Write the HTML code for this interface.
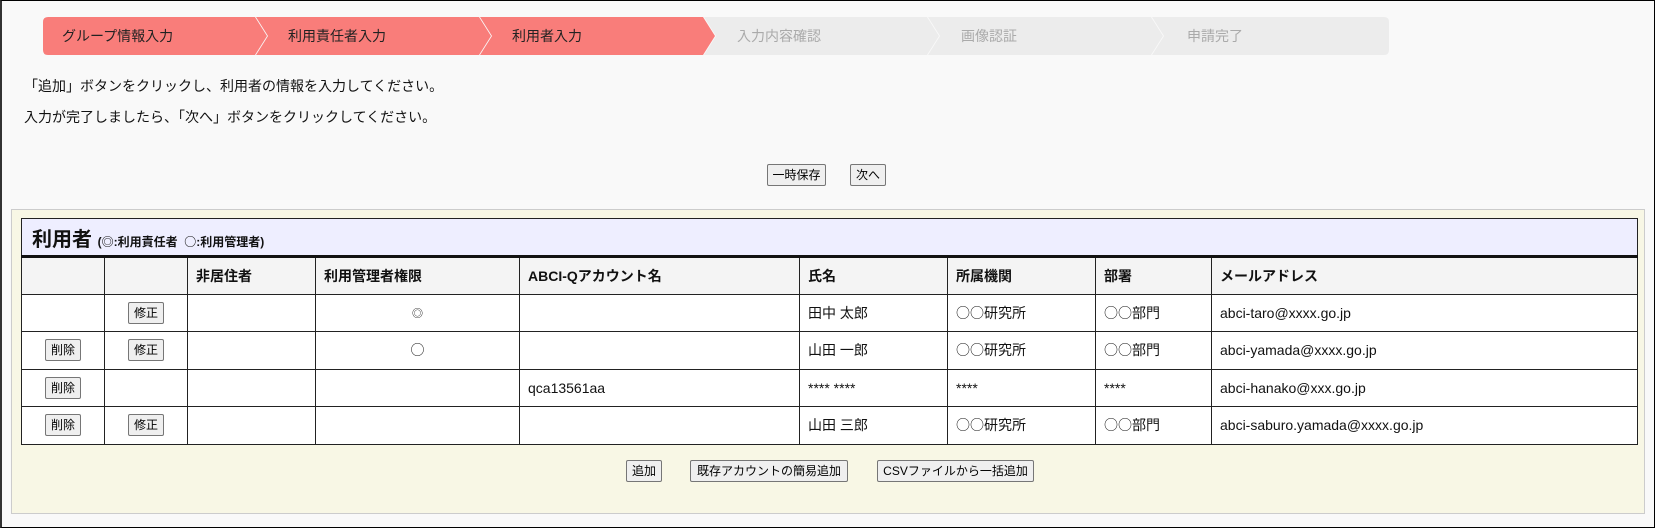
<!DOCTYPE html>
<html><head><meta charset="utf-8"><style>
*{box-sizing:border-box;margin:0;padding:0}
html,body{width:1655px;height:528px;overflow:hidden}
body{background:#f9f9f9;font-family:"Liberation Sans","Noto Sans CJK JP",sans-serif;font-size:14px;color:#111;position:relative;border:1px solid #000;border-left:2px solid #333}
.steps{position:absolute;left:41px;top:16px;height:38px;width:1346px}
.st{position:absolute;top:0;height:38px;line-height:38px;font-size:14px;padding-left:19px}
.btn{position:absolute;background:#efefef;border:1px solid #767676;border-radius:2px;font-size:12px;height:22px;line-height:20px;text-align:center;color:#000}
.msg{position:absolute;left:22px;font-size:14px}
.panel{position:absolute;left:9px;top:208px;width:1634px;height:305px;background:#f8f7e5;border:1px solid #ccc}
table{position:absolute;left:9px;top:8px;border-collapse:collapse;width:1617px;background:#fff}
td,th{border:1px solid #222;font-size:14px;height:37.5px;padding:0 8px;text-align:left}
th{background:#f4f4f4;font-weight:bold}
.ttl{background:#eef;height:38px;border-bottom:3px solid #111;font-weight:bold;font-size:20px;padding-left:10px}
.ttl small{font-size:12px}
td .b{position:static;display:inline-block;padding:0 5px}
.c{text-align:center}
.cj{font-family:"Noto Sans CJK JP",sans-serif}
</style></head><body>
<div class="steps">
<svg width="1346" height="38" style="position:absolute;left:0;top:0">
<path d="M5 0H212L224 19L212 38H5Q0 38 0 33V5Q0 0 5 0Z" fill="#f97d7a"/>
<path d="M213 0H436L448 19L436 38H213L225 19Z" fill="#f97d7a"/>
<path d="M437 0H660L672 19L660 38H437L449 19Z" fill="#f97d7a"/>
<path d="M661 0H884L896 19L884 38H661L673 19Z" fill="#ececec"/>
<path d="M885 0H1108L1120 19L1108 38H885L897 19Z" fill="#ececec"/>
<path d="M1109 0H1341Q1346 0 1346 5V33Q1346 38 1341 38H1109L1121 19Z" fill="#ececec"/>
</svg>
<div class="st" style="left:0;color:#222">グループ情報入力</div>
<div class="st" style="left:226px;color:#222">利用責任者入力</div>
<div class="st" style="left:450px;color:#222">利用者入力</div>
<div class="st" style="left:675px;color:#aaa">入力内容確認</div>
<div class="st" style="left:899px;color:#aaa">画像認証</div>
<div class="st" style="left:1125px;color:#aaa">申請完了</div>
</div>
<div class="msg" style="top:75px">「追加」ボタンをクリックし、利用者の情報を入力してください。</div>
<div class="msg" style="top:106px">入力が完了しましたら、「次へ」ボタンをクリックしてください。</div>
<div class="btn" style="left:765px;top:163px;width:59px">一時保存</div>
<div class="btn" style="left:848px;top:163px;width:36px">次へ</div>
<div class="panel">
<table>
<tr><td colspan="9" class="ttl">利用者 <small>(<span class="cj">◎</span>:利用責任者&nbsp; <span class="cj">○</span>:利用管理者)</small></td></tr>
<tr><th style="width:83px"></th><th style="width:83px"></th><th style="width:128px">非居住者</th><th style="width:204px">利用管理者権限</th><th style="width:280px">ABCI-Qアカウント名</th><th style="width:148px">氏名</th><th style="width:148px">所属機関</th><th style="width:116px">部署</th><th>メールアドレス</th></tr>
<tr><td></td><td class="c"><span class="btn b">修正</span></td><td></td><td class="c cj" style="font-size:11px">◎</td><td></td><td>田中 太郎</td><td><span class="cj">○○</span>研究所</td><td><span class="cj">○○</span>部門</td><td>abci-taro@xxxx.go.jp</td></tr>
<tr><td class="c"><span class="btn b">削除</span></td><td class="c"><span class="btn b">修正</span></td><td></td><td class="c cj">○</td><td></td><td>山田 一郎</td><td><span class="cj">○○</span>研究所</td><td><span class="cj">○○</span>部門</td><td>abci-yamada@xxxx.go.jp</td></tr>
<tr><td class="c"><span class="btn b">削除</span></td><td></td><td></td><td></td><td>qca13561aa</td><td>**** ****</td><td>****</td><td>****</td><td>abci-hanako@xxx.go.jp</td></tr>
<tr><td class="c"><span class="btn b">削除</span></td><td class="c"><span class="btn b">修正</span></td><td></td><td></td><td></td><td>山田 三郎</td><td><span class="cj">○○</span>研究所</td><td><span class="cj">○○</span>部門</td><td>abci-saburo.yamada@xxxx.go.jp</td></tr>
</table>
<div class="btn" style="left:614px;top:250px;width:36px">追加</div>
<div class="btn" style="left:678px;top:250px;width:158px">既存アカウントの簡易追加</div>
<div class="btn" style="left:865px;top:250px;width:157px">CSVファイルから一括追加</div>
</div>
</body></html>
